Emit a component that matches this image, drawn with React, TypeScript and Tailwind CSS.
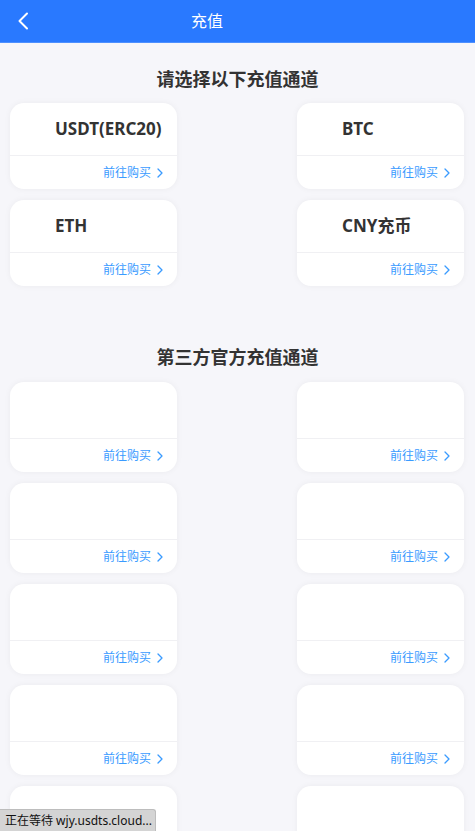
import React from "react";

const FONT = '"Noto Sans", "Noto Sans CJK SC", sans-serif';

const mainChannels = ["USDT(ERC20)", "BTC", "ETH", "CNY充币"];
const thirdParty = Array.from({ length: 10 }, (_, i) => i);

function ChevronRight() {
  return (
    <svg width="6" height="10" viewBox="0 0 6 10" fill="none" className="ml-[6px]">
      <path d="M1 1l4 4-4 4" stroke="#3a9bff" strokeWidth="1.3" strokeLinecap="round" strokeLinejoin="round" />
    </svg>
  );
}

function ChannelCard({ label, tall }: { label?: string; tall?: boolean }) {
  return (
    <div className="bg-white rounded-[14px] shadow-[0_0_6px_rgba(0,0,0,0.05)] overflow-hidden">
      <div className={`flex items-center pl-[45px] ${tall ? "h-[56px]" : "h-[52px]"}`}>
        {label && <span className="text-[17px] font-bold text-[#333]">{label}</span>}
      </div>
      <div className="h-px bg-[#f0f0f3]" />
      <div className="h-[33px] flex items-center justify-end pr-[14px] text-[12px] text-[#3a9bff]">
        前往购买
        <ChevronRight />
      </div>
    </div>
  );
}

export default function App() {
  return (
    <div className="min-h-[831px] bg-[#f6f6fa]" style={{ fontFamily: FONT }}>
      {/* Top bar */}
      <div className="h-[43px] bg-[#2979ff] border-b border-[#4e90ff] flex items-center">
        <button className="w-[48px] pl-[17px] flex items-center">
          <svg width="12" height="18" viewBox="0 0 12 18" fill="none">
            <path d="M10 1.5L2.5 9l7.5 7.5" stroke="white" strokeWidth="2" strokeLinecap="round" strokeLinejoin="round" />
          </svg>
        </button>
        <h1 className="ml-[143px] text-[16px] text-white">充值</h1>
      </div>

      <h2 className="mt-[24px] text-center text-[18px] leading-[24px] font-bold text-[#333]">
        请选择以下充值通道
      </h2>
      <div className="mt-[12px] pl-[10px] pr-[11px] grid grid-cols-[167px_167px] justify-between gap-y-[11px]">
        {mainChannels.map((c) => (
          <ChannelCard key={c} label={c} />
        ))}
      </div>

      <h2 className="mt-[59px] text-center text-[18px] leading-[24px] font-bold text-[#333]">
        第三方官方充值通道
      </h2>
      <div className="mt-[13px] pl-[10px] pr-[11px] grid grid-cols-[167px_167px] justify-between gap-y-[11px] pb-4">
        {thirdParty.map((i) => (
          <ChannelCard key={i} tall />
        ))}
      </div>

      {/* Loading status */}
      <div className="fixed left-0 bottom-0 h-[22px] w-[156px] bg-[#d4d4d4] border-t border-r border-[#bdbdbd] rounded-tr-[3px] flex items-center pl-[5px] text-[12px] text-[#111] whitespace-nowrap">
        正在等待 wjy.usdts.cloud...
      </div>
    </div>
  );
}
